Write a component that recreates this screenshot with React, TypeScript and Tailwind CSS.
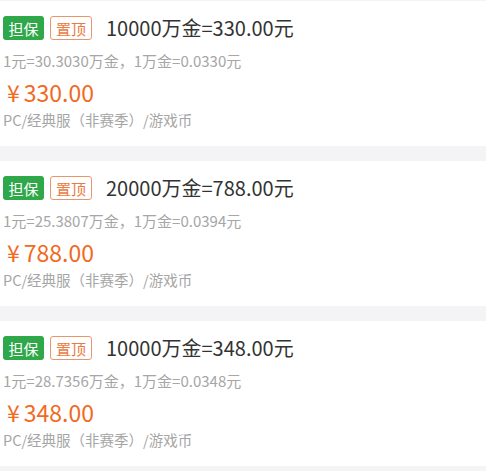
const items = [
  { amount: "10000万金=330.00元", rate: "1元=30.3030万金，1万金=0.0330元", price: "330.00" },
  { amount: "20000万金=788.00元", rate: "1元=25.3807万金，1万金=0.0394元", price: "788.00" },
  { amount: "10000万金=348.00元", rate: "1元=28.7356万金，1万金=0.0348元", price: "348.00" },
];

const font = { fontFamily: '"Noto Sans CJK SC", "Noto Sans", sans-serif' };

function Card({ amount, rate, price }: { amount: string; rate: string; price: string }) {
  return (
    <div className="bg-white h-[145px] pl-[3px] pt-[15px]">
      <div className="flex items-center h-[24px]">
        <span className="h-[24px] w-[41px] flex items-center justify-center rounded-[3px] bg-[#2fa84a] text-white text-[15px] leading-none">
          担保
        </span>
        <span className="ml-[6px] h-[24px] w-[42px] flex items-center justify-center rounded-[3px] border border-[#e9956a] text-[#ea7a3f] text-[15px] leading-none">
          置顶
        </span>
        <span className="ml-[14px] text-[20px] leading-none text-[#333]">{amount}</span>
      </div>
      <div className="mt-[13px] text-[15px] leading-none text-[#a6a6a6]">{rate}</div>
      <div className="mt-[13px] pl-[4px] flex items-baseline text-[23px] leading-none text-[#f06a24]">
        <span className="mr-[4px]">¥</span>
        <span>{price}</span>
      </div>
      <div className="mt-[9px] text-[14.5px] leading-none text-[#a6a6a6]">PC/经典服（非赛季）/游戏币</div>
    </div>
  );
}

export default function App() {
  return (
    <div className="w-[486px] h-[471px] bg-[#f4f4f6] pt-[1px] flex flex-col gap-[15px] overflow-hidden" style={font}>
      {items.map((it, i) => (
        <Card key={i} {...it} />
      ))}
    </div>
  );
}
